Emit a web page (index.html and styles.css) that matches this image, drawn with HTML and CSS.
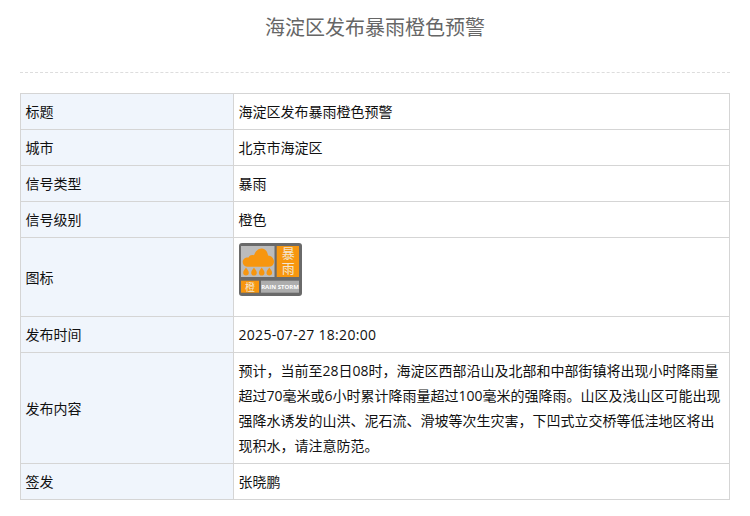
FILE: index.html
```html
<!DOCTYPE html>
<html lang="zh-CN">
<head>
<meta charset="utf-8">
<title>海淀区发布暴雨橙色预警</title>
<link rel="stylesheet" href="styles.css">
</head>
<body>
<main class="page">
  <h1 class="title">海淀区发布暴雨橙色预警</h1>
  <table class="info">
    <tr><th>标题</th><td>海淀区发布暴雨橙色预警</td></tr>
    <tr><th>城市</th><td>北京市海淀区</td></tr>
    <tr><th>信号类型</th><td>暴雨</td></tr>
    <tr><th>信号级别</th><td>橙色</td></tr>
    <tr><th>图标</th><td>
      <svg class="icon" viewBox="0 0 64 53" width="64" height="53" role="img" aria-label="暴雨橙色预警">
        <rect x="0" y="0" width="63" height="53" rx="3" fill="#6a6a6a"/>
        <rect x="2" y="3" width="33.500" height="31" fill="#bcbcbc"/>
        <rect x="37.700" y="3" width="22.300" height="31" fill="#f7960f"/>
        <rect x="2" y="37.700" width="18" height="12" fill="#f7960f"/>
        <rect x="22" y="37.700" width="38" height="12" fill="#adadad"/>
        <path d="M3.700 19C3.700 16 6.500 14 9.500 14.500C10.500 12 13 11.500 15 12.300C16.500 8 19.500 5.200 23 5.500C26.500 5.800 28.700 9 29 12.500C32 12.800 35 15 35 18.500C35 22 32.500 23.700 30 23.700H8C5.500 23.700 3.700 21.700 3.700 19Z" fill="#f7960f"/>
        <path d="M7 24.500C8 26.200 9.800 27.800 9.800 29.700A2.800 2.800 0 0 1 4.200 29.700C4.200 27.800 6 26.200 7 24.500Z" fill="#f7960f"/>
        <path d="M15 24.500C16 26.200 17.800 27.800 17.800 29.700A2.800 2.800 0 0 1 12.200 29.700C12.200 27.800 14 26.200 15 24.500Z" fill="#f7960f"/>
        <path d="M22.700 24.500C23.700 26.200 25.500 27.800 25.500 29.700A2.800 2.800 0 0 1 19.900 29.700C19.900 27.800 21.700 26.200 22.700 24.500Z" fill="#f7960f"/>
        <path d="M30.300 24.500C31.300 26.200 33.100 27.800 33.100 29.700A2.800 2.800 0 0 1 27.500 29.700C27.500 27.800 29.300 26.200 30.300 24.500Z" fill="#f7960f"/>
        <text class="icon-cn" x="48.800" y="4">暴雨</text>
        <text class="icon-small" x="11" y="47.500">橙</text>
        <text class="icon-en" x="41" y="46">RAIN STORM</text>
      </svg>
    </td></tr>
    <tr><th>发布时间</th><td class="datetime">2025-07-27 18:20:00</td></tr>
    <tr><th>发布内容</th><td>预计，当前至28日08时，海淀区西部沿山及北部和中部街镇将出现小时降雨量超过70毫米或6小时累计降雨量超过100毫米的强降雨。山区及浅山区可能出现强降水诱发的山洪、泥石流、滑坡等次生灾害，下凹式立交桥等低洼地区将出现积水，请注意防范。</td></tr>
    <tr><th>签发</th><td>张晓鹏</td></tr>
  </table>
</main>
</body>
</html>
```
FILE: styles.css
```css
html, body {
  margin: 0;
  padding: 0;
  background: #fff;
}
body {
  font-family: "Open Sans", "Noto Sans CJK SC", sans-serif;
  font-size: 14px;
  color: #111;
}
.page {
  padding: 0 20px;
}
.title {
  margin: 0 0 20px;
  height: 72px;
  padding: 0;
  border-bottom: 1px dashed #ddd;
  font-size: 20px;
  font-weight: normal;
  line-height: 56px;
  text-align: center;
  color: #666;
}
.info {
  width: 710px;
  table-layout: fixed;
  border-collapse: collapse;
  line-height: 25px;
}
.info th, .info td {
  border: 1px solid #d5d5d5;
  padding: 5px 5px 5px 4.500px;
  text-align: left;
  font-weight: normal;
}
.info th {
  width: 202.500px;
  background: #f0f5fc;
}
.info .datetime {
  letter-spacing: 0.300px;
}
.icon {
  display: block;
  margin: 0 0 15px;
}
.icon-cn {
  font-size: 13px;
  letter-spacing: 1.500px;
  writing-mode: vertical-rl;
  fill: #f3e6d2;
}
.icon-small {
  font-size: 10px;
  fill: #f3e6d2;
  text-anchor: middle;
}
.icon-en {
  font-size: 6px;
  font-weight: bold;
  fill: #fff;
  text-anchor: middle;
}
```
